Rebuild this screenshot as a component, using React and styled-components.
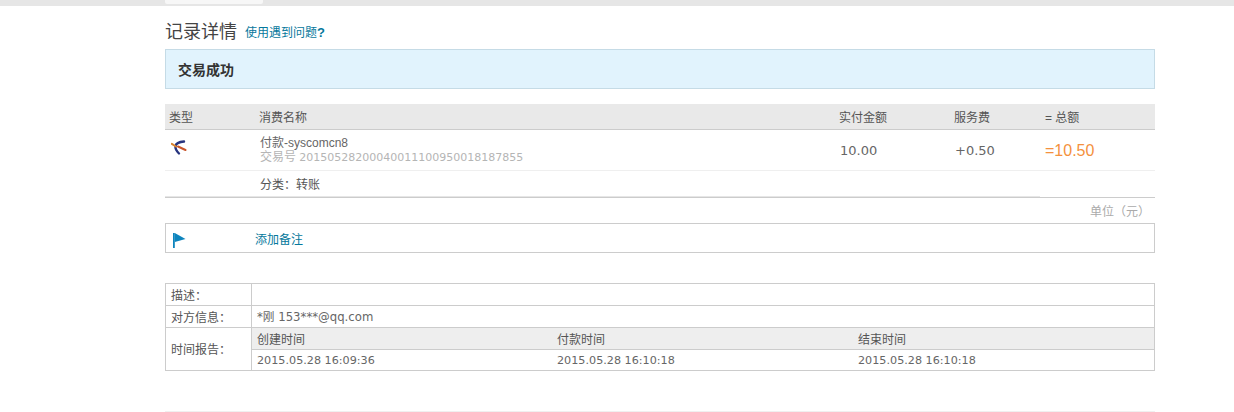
import React from "react";
import styled, { createGlobalStyle } from "styled-components";

const GlobalStyle = createGlobalStyle`
  html, body {
    margin: 0;
    padding: 0;
    background: #fff;
    font-family: "Liberation Sans", "Noto Sans CJK SC", sans-serif;
    font-size: 12px;
    color: #555;
  }
`;

const numberFont = `"DejaVu Sans", "Noto Sans CJK SC", sans-serif`;

const TopBar = styled.div`
  height: 6px;
  background: #e6e6e6;
  padding-left: 165px;
`;

const TopTab = styled.div`
  width: 98px;
  height: 4px;
  background: #f7f7f7;
  border-radius: 0 0 2px 2px;
`;

const Page = styled.div`
  width: 990px;
  margin-left: 165px;
  height: 405px;
  border-bottom: 1px solid #f0f0f0;
`;

const TitleRow = styled.div`
  display: flex;
  align-items: center;
  gap: 8px;
  height: 39px;
  padding-top: 4px;
`;

const Title = styled.h2`
  margin: 0;
  font-size: 18px;
  font-weight: 400;
  color: #444;
`;

const HelpLink = styled.a`
  color: #06789c;
  font-size: 12px;
  margin-top: 3px;
`;

const HelpMark = styled.b`
  font-size: 13px;
`;

const Banner = styled.div`
  height: 38px;
  margin-bottom: 15px;
  display: flex;
  align-items: center;
  padding-left: 12px;
  background: #e1f3fd;
  border: 1px solid #c5dbe6;
  font-size: 14px;
  font-weight: 700;
  color: #333;
`;

const recordColumns = "90px 580px 115px 90px 1fr";

const RecordHead = styled.div`
  display: grid;
  grid-template-columns: ${recordColumns};
  align-items: center;
  height: 25px;
  background: #e9e9e9;
  border-bottom: 1px solid #ccc;
  color: #555;
`;

const HeadCell = styled.span`
  padding-left: ${(p) => p.$indent || 4}px;
`;

const RecordRow = styled.div`
  display: grid;
  grid-template-columns: ${recordColumns};
  align-items: center;
  height: 40px;
  border-bottom: 1px solid #efefef;
`;

const IconCell = styled.div`
  display: flex;
  padding: 0 0 5px 6px;
`;

const NameCell = styled.div`
  padding-left: 5px;
  line-height: 14px;
  color: #666;
`;

const TradeNo = styled.div`
  color: #b5b5b5;
  white-space: nowrap;
`;

const TradeDigits = styled.span`
  font-family: ${numberFont};
  font-size: 11px;
`;

const Amount = styled.span`
  padding-left: 5px;
  font-family: ${numberFont};
  font-size: 13px;
  color: #666;
`;

const Total = styled.span`
  padding: 2px 0 0 5px;
  font-size: 16px;
  color: #f4913d;
`;

const CategoryRow = styled.div`
  height: 26px;
  border-bottom: 1px solid #ccc;
`;

const CategoryInner = styled.div`
  display: flex;
  align-items: center;
  width: 780px;
  height: 25px;
  padding-left: 95px;
  border-bottom: 1px solid #e6e6e6;
  color: #555;
`;

const Unit = styled.div`
  height: 25px;
  display: flex;
  align-items: center;
  justify-content: flex-end;
  padding-right: 5px;
  color: #aaa;
`;

const NoteBox = styled.div`
  display: flex;
  align-items: center;
  height: 28px;
  margin-bottom: 30px;
  border: 1px solid #ccc;
`;

const FlagCell = styled.div`
  width: 83px;
  padding: 3px 0 0 6px;
  display: flex;
`;

const NoteLink = styled.a`
  color: #06789c;
`;

const InfoTable = styled.div`
  display: grid;
  grid-template-columns: 86px 1fr;
  border: 1px solid #ccc;
  color: #555;
`;

const InfoLabel = styled.div`
  display: flex;
  align-items: center;
  padding-left: 5px;
  box-sizing: border-box;
  width: 86px;
  height: ${(p) => (p.$last ? 42 : 22)}px;
  padding-bottom: ${(p) => (p.$last ? 2 : 0)}px;
  border-right: 1px solid #ccc;
  border-bottom: ${(p) => (p.$last ? "none" : "1px solid #ccc")};
`;

const InfoValue = styled.div`
  display: flex;
  align-items: center;
  padding: 0 0 2px 5px;
  font-family: ${numberFont};
  font-size: 11.7px;
  color: #666;
  border-bottom: 1px solid #ccc;
`;

const TimeGrid = styled.div`
  display: grid;
  grid-template-columns: 300px 301px 1fr;
`;

const TimeHead = styled.div`
  display: flex;
  align-items: center;
  height: 20px;
  padding: 0 0 1px 5px;
  background: #eee;
  border-bottom: 1px solid #ccc;
`;

const TimeValue = styled.div`
  display: flex;
  align-items: center;
  height: 19px;
  padding: 1px 0 0 5px;
  font-family: ${numberFont};
  font-size: 11.2px;
  color: #666;
`;

const TransferIcon = () => (
  <svg width="17" height="16" viewBox="0 0 17 16">
    <path d="M13 1.500C9 1.800 5 3.500 4.500 6c-.4 2.500 1.500 5.500 3.500 7.500" fill="none" stroke="#27347f" strokeWidth="2.400" strokeLinecap="round" />
    <path d="M.8 3.800 5 6.500" stroke="#d9822c" strokeWidth="2" strokeLinecap="round" />
    <path d="M7 6.500 14.500 10" stroke="#c9552c" strokeWidth="2" strokeLinecap="round" />
  </svg>
);

const FlagIcon = () => (
  <svg width="14" height="16" viewBox="0 0 14 16">
    <path d="M1 1h1.800v15H1z" fill="#0d84bd" />
    <path d="M2.800 1 13.500 7 2.800 10z" fill="#0d84bd" />
  </svg>
);

const App = () => (
  <>
    <GlobalStyle />
    <TopBar>
      <TopTab />
    </TopBar>
    <Page>
      <TitleRow>
        <Title>记录详情</Title>
        <HelpLink>
          使用遇到问题<HelpMark>?</HelpMark>
        </HelpLink>
      </TitleRow>
      <Banner>交易成功</Banner>
      <RecordHead>
        <HeadCell>类型</HeadCell>
        <HeadCell>消费名称</HeadCell>
        <HeadCell>实付金额</HeadCell>
        <HeadCell>服务费</HeadCell>
        <HeadCell $indent={5}>= 总额</HeadCell>
      </RecordHead>
      <RecordRow>
        <IconCell>
          <TransferIcon />
        </IconCell>
        <NameCell>
          付款-syscomcn8
          <TradeNo>
            交易号 <TradeDigits>20150528200040011100950018187855</TradeDigits>
          </TradeNo>
        </NameCell>
        <Amount>10.00</Amount>
        <Amount>+0.50</Amount>
        <Total>=10.50</Total>
      </RecordRow>
      <CategoryRow>
        <CategoryInner>分类：转账</CategoryInner>
      </CategoryRow>
      <Unit>单位（元）</Unit>
      <NoteBox>
        <FlagCell>
          <FlagIcon />
        </FlagCell>
        <NoteLink>添加备注</NoteLink>
      </NoteBox>
      <InfoTable>
        <InfoLabel>描述：</InfoLabel>
        <InfoValue />
        <InfoLabel>对方信息：</InfoLabel>
        <InfoValue>*刚 153***@qq.com</InfoValue>
        <InfoLabel $last>时间报告：</InfoLabel>
        <TimeGrid>
          <TimeHead>创建时间</TimeHead>
          <TimeHead>付款时间</TimeHead>
          <TimeHead>结束时间</TimeHead>
          <TimeValue>2015.05.28 16:09:36</TimeValue>
          <TimeValue>2015.05.28 16:10:18</TimeValue>
          <TimeValue>2015.05.28 16:10:18</TimeValue>
        </TimeGrid>
      </InfoTable>
    </Page>
  </>
);

export default App;
